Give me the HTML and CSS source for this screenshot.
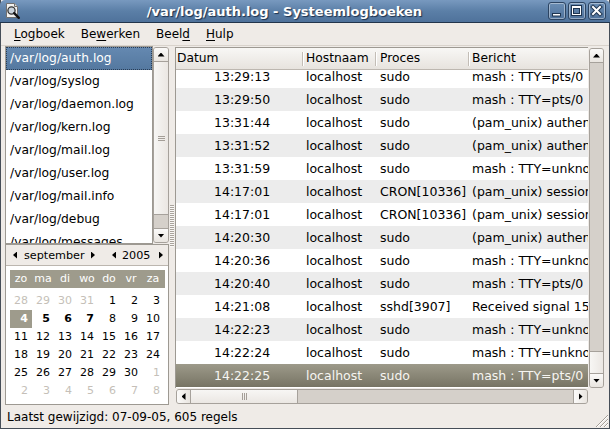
FILE: index.html
```html
<!DOCTYPE html>
<html lang="nl">
<head>
<meta charset="utf-8">
<title>Systeemlogboeken</title>
<link rel="stylesheet" href="styles.css">
</head>
<body>
<div class="window">
  <div class="titlebar">
    <svg class="appicon" width="17" height="18" viewBox="0 0 17 18">
      <path d="M2.5 1.5h8l3 3v11h-11z" fill="#f2f2f0" stroke="#707070"/>
      <path d="M10.5 1.5v3h3" fill="#d8d8d6" stroke="#707070"/>
      <circle cx="7.5" cy="8.5" r="3.6" fill="#c9d3dc" stroke="#333" stroke-width="1.3"/>
      <path d="M10.2 11.2l4.6 4.6" stroke="#111" stroke-width="2.4" stroke-linecap="round"/>
    </svg>
    <div class="title">/var/log/auth.log - Systeemlogboeken</div>
    <div class="wbtns">
      <div class="wbtn"><svg width="16" height="16" viewBox="0 0 16 16"><rect x="3.5" y="10.5" width="8" height="2.5" fill="#fff" stroke="#1f3550"/></svg></div>
      <div class="wbtn"><svg width="16" height="16" viewBox="0 0 16 16"><rect x="2.5" y="2.5" width="10" height="10" fill="#fff" stroke="#1f3550"/><rect x="4.5" y="5.5" width="6" height="5" fill="#5a7da5" stroke="#1f3550"/></svg></div>
      <div class="wbtn"><svg width="16" height="16" viewBox="0 0 16 16"><path d="M4 4l7 7M11 4l-7 7" stroke="#1f3550" stroke-width="4" stroke-linecap="square"/><path d="M4 4l7 7M11 4l-7 7" stroke="#fff" stroke-width="2" stroke-linecap="square"/></svg></div>
    </div>
  </div>

  <div class="menubar">
    <span class="mi"><u>L</u>ogboek</span>
    <span class="mi">Be<u>w</u>erken</span>
    <span class="mi">Beel<u>d</u></span>
    <span class="mi"><u>H</u>ulp</span>
  </div>

  <div class="main">
    <div class="leftpane">
      <div class="filebox">
        <div class="filelist">
          <div class="file sel">/var/log/auth.log</div>
          <div class="file">/var/log/syslog</div>
          <div class="file">/var/log/daemon.log</div>
          <div class="file">/var/log/kern.log</div>
          <div class="file">/var/log/mail.log</div>
          <div class="file">/var/log/user.log</div>
          <div class="file">/var/log/mail.info</div>
          <div class="file">/var/log/debug</div>
          <div class="file">/var/log/messages</div>
        </div>
        <div class="sb v lsb">
          <div class="step"><span class="arr up"></span></div>
          <div class="thumb lthumb"><span class="grip-h"></span></div>
          <div class="trough"></div>
          <div class="step bot"><span class="arr down"></span></div>
        </div>
      </div>

      <div class="calendar">
        <div class="calhead">
          <span class="carr left a1"></span>
          <span class="month">september</span>
          <span class="carr right"></span>
          <span class="carr left a3"></span>
          <span class="year">2005</span>
          <span class="carr right"></span>
        </div>
        <div class="calbody">
          <div class="daynames">
            <span>zo</span><span>ma</span><span>di</span><span>wo</span><span>do</span><span>vr</span><span>za</span>
          </div>
          <div class="week"><span class="o">28</span><span class="o">29</span><span class="o">30</span><span class="o">31</span><span>1</span><span>2</span><span>3</span></div>
          <div class="week"><span class="today">4</span><span class="b">5</span><span class="b">6</span><span class="b">7</span><span>8</span><span>9</span><span>10</span></div>
          <div class="week"><span>11</span><span>12</span><span>13</span><span>14</span><span>15</span><span>16</span><span>17</span></div>
          <div class="week"><span>18</span><span>19</span><span>20</span><span>21</span><span>22</span><span>23</span><span>24</span></div>
          <div class="week"><span>25</span><span>26</span><span>27</span><span>28</span><span>29</span><span>30</span><span class="o">1</span></div>
          <div class="week"><span class="o">2</span><span class="o">3</span><span class="o">4</span><span class="o">5</span><span class="o">6</span><span class="o">7</span><span class="o">8</span></div>
        </div>
      </div>
    </div>

    <div class="handle"><div class="pgrip"></div></div>

    <div class="rightpane">
      <div class="tree">
        <div class="thead">
          <div class="th c1">Datum</div>
          <div class="th c2 sep">Hostnaam</div>
          <div class="th c3 sep">Proces</div>
          <div class="th c4 sep">Bericht</div>
        </div>
        <div class="tbody">
          <div class="rows">
            <div class="r"><span class="c1">13:29:13</span><span class="c2">localhost</span><span class="c3">sudo</span><span class="c4">mash : TTY=pts/0</span></div>
            <div class="r alt"><span class="c1">13:29:50</span><span class="c2">localhost</span><span class="c3">sudo</span><span class="c4">mash : TTY=pts/0</span></div>
            <div class="r"><span class="c1">13:31:44</span><span class="c2">localhost</span><span class="c3">sudo</span><span class="c4">(pam_unix) authentication failure</span></div>
            <div class="r alt"><span class="c1">13:31:52</span><span class="c2">localhost</span><span class="c3">sudo</span><span class="c4">(pam_unix) authentication failure</span></div>
            <div class="r"><span class="c1">13:31:59</span><span class="c2">localhost</span><span class="c3">sudo</span><span class="c4">mash : TTY=unknown</span></div>
            <div class="r alt"><span class="c1">14:17:01</span><span class="c2">localhost</span><span class="c3">CRON[10336]</span><span class="c4">(pam_unix) session opened for user root</span></div>
            <div class="r"><span class="c1">14:17:01</span><span class="c2">localhost</span><span class="c3">CRON[10336]</span><span class="c4">(pam_unix) session closed for user root</span></div>
            <div class="r alt"><span class="c1">14:20:30</span><span class="c2">localhost</span><span class="c3">sudo</span><span class="c4">(pam_unix) authentication failure</span></div>
            <div class="r"><span class="c1">14:20:36</span><span class="c2">localhost</span><span class="c3">sudo</span><span class="c4">mash : TTY=unknown</span></div>
            <div class="r alt"><span class="c1">14:20:40</span><span class="c2">localhost</span><span class="c3">sudo</span><span class="c4">mash : TTY=pts/0</span></div>
            <div class="r"><span class="c1">14:21:08</span><span class="c2">localhost</span><span class="c3">sshd[3907]</span><span class="c4">Received signal 15; terminating.</span></div>
            <div class="r alt"><span class="c1">14:22:23</span><span class="c2">localhost</span><span class="c3">sudo</span><span class="c4">mash : TTY=unknown</span></div>
            <div class="r"><span class="c1">14:22:24</span><span class="c2">localhost</span><span class="c3">sudo</span><span class="c4">mash : TTY=unknown</span></div>
            <div class="r sel"><span class="c1">14:22:25</span><span class="c2">localhost</span><span class="c3">sudo</span><span class="c4">mash : TTY=pts/0</span></div>
          </div>
        </div>
      </div>
      <div class="sb v rsb">
        <div class="step"><span class="arr up"></span></div>
        <div class="trough"></div>
        <div class="thumb rthumb"></div>
        <div class="step bot"><span class="arr down"></span></div>
      </div>
      <div class="sb h hsb">
        <div class="step"><span class="arr left"></span></div>
        <div class="thumb hthumb"><span class="grip-v"></span></div>
        <div class="trough"></div>
        <div class="step bot"><span class="arr right"></span></div>
      </div>
      <div class="corner"></div>
    </div>
  </div>

  <div class="statusbar">
    <span class="stext">Laatst gewijzigd: 07-09-05, 605 regels</span>
    <svg class="resize" width="15" height="15" viewBox="0 0 15 15">
      <path d="M3 15L15 3M7 15L15 7M11 15L15 11" stroke="#a39d96" stroke-width="1"/>
      <path d="M4 15L15 4M8 15L15 8M12 15L15 12" stroke="#ffffff" stroke-width="1"/>
    </svg>
  </div>
</div>
</body>
</html>
```

FILE: styles.css
```css
* { box-sizing: border-box; }
html, body { margin: 0; padding: 0; }
body {
  width: 610px;
  height: 429px;
  overflow: hidden;
  background: #efebe7;
  font-family: "DejaVu Sans", sans-serif;
  font-size: 12.5px;
  color: #000;
}

.window {
  width: 610px;
  height: 429px;
  display: flex;
  flex-direction: column;
  border: 1px solid #454d57;
  border-top: 0;
  background: #efebe7;
}

/* title bar */
.titlebar {
  flex: none;
  height: 23px;
  margin: 0 -1px;
  display: flex;
  align-items: center;
  background: linear-gradient(#7899bf, #5b7fa7 50%, #4f729b);
  border-bottom: 1px solid #22354c;
  border-radius: 5px 5px 0 0;
  color: #fff;
}
.appicon { flex: none; margin-left: 4px; }
.title {
  flex: 1;
  text-align: center;
  font-weight: bold;
  font-size: 13px;
  text-shadow: 1px 1px 1px #1c304b;
  white-space: nowrap;
}
.wbtns { display: flex; gap: 2px; margin-right: 4px; }
.wbtn {
  width: 18px;
  height: 18px;
  border: 1px solid #2c4462;
  border-radius: 3px;
  background: linear-gradient(#6a8db4, #4f729b);
  box-shadow: inset 0 0 0 1px rgba(255,255,255,0.4);
}
.wbtn svg { display: block; }

/* menu bar */
.menubar {
  flex: none;
  height: 23px;
  display: flex;
  align-items: center;
  padding-left: 5px;
  font-size: 12px;
  border-bottom: 1px solid #d9d3cc;
}
.mi { padding: 0 8px; }
.mi u { text-underline-offset: 2px; }

/* main area */
.main {
  flex: none;
  height: 359px;
  display: flex;
  padding: 0 4px;
}
.leftpane {
  width: 164px;
  display: flex;
  flex-direction: column;
}
.filebox { height: 198px; display: flex; }
.filelist {
  width: 148px;
  border: 1px solid #9d9992;
  background: #fff;
  overflow: hidden;
  font-size: 12.3px;
}
.file {
  height: 23px;
  line-height: 23px;
  padding-left: 4px;
  white-space: nowrap;
}
.file.sel {
  background: linear-gradient(#6589b1, #54789f);
  color: #fff;
  outline: 1px dotted #2a3d55;
  outline-offset: -1px;
}

/* scrollbars */
.sb {
  display: flex;
  background: #d5d0ca;
  border: 1px solid #a6a19b;
  border-radius: 3px;
  overflow: hidden;
}
.sb.v { flex-direction: column; }
.sb.h { flex-direction: row; }
.step {
  flex: none;
  display: flex;
  align-items: center;
  justify-content: center;
  background: linear-gradient(#fbfaf9, #e9e5e0);
}
.sb.v .step { height: 14px; border-bottom: 1px solid #a6a19b; }
.sb.v .step.bot { border-bottom: 0; border-top: 1px solid #a6a19b; }
.sb.h .step { width: 14px; border-right: 1px solid #a6a19b; background: linear-gradient(90deg, #fbfaf9, #e9e5e0); }
.sb.h .step.bot { border-right: 0; border-left: 1px solid #a6a19b; }
.trough { flex: 1; }
.thumb {
  flex: none;
  display: flex;
  align-items: center;
  justify-content: center;
}
.sb.v .thumb { background: linear-gradient(90deg, #f7f6f4, #ebe7e3); border-bottom: 1px solid #a6a19b; }
.sb.h .thumb { background: linear-gradient(#f7f6f4, #ebe7e3); border-right: 1px solid #a6a19b; }
.lthumb { height: 153px; }
.rthumb { height: 22px; border-top: 1px solid #a6a19b; border-bottom: 0 !important; }
.hthumb { width: 107px; }
.grip-h {
  width: 7px;
  height: 5px;
  background: repeating-linear-gradient(#a49e97 0 1px, transparent 1px 2px);
}
.grip-v {
  width: 5px;
  height: 7px;
  background: repeating-linear-gradient(90deg, #a49e97 0 1px, transparent 1px 2px);
}
.arr { display: block; background: #000; }
.arr.up { width: 7px; height: 4px; clip-path: polygon(0 100%, 100% 100%, 50% 0); }
.arr.down { width: 7px; height: 4px; clip-path: polygon(0 0, 100% 0, 50% 100%); }
.arr.left { width: 4px; height: 7px; clip-path: polygon(100% 0, 100% 100%, 0 50%); }
.arr.right { width: 4px; height: 7px; clip-path: polygon(0 0, 0 100%, 100% 50%); }

.lsb { width: 16px; margin: 1px 0; }

/* calendar */
.calendar {
  height: 161px;
  border: 1px solid #9d9992;
  display: flex;
  flex-direction: column;
  font-size: 11px;
}
.calhead {
  height: 21px;
  flex: none;
  display: flex;
  align-items: center;
  background: #efebe7;
  border-bottom: 1px solid #bcb6af;
  font-size: 11.2px;
}
.carr { display: block; width: 4px; height: 7px; background: #000; }
.carr.left { clip-path: polygon(100% 0, 100% 100%, 0 50%); }
.carr.right { clip-path: polygon(0 0, 0 100%, 100% 50%); }
.carr.a1 { margin-left: 7px; }
.month { width: 74px; padding-left: 7px; }
.carr.a3 { margin-left: 17px; }
.year { width: 43px; padding-left: 6px; }
.calbody {
  flex: 1;
  background: #fff;
  padding: 4px 3px 0 4px;
}
.daynames, .week {
  display: grid;
  grid-template-columns: repeat(7, 22px);
}
.daynames {
  height: 18px;
  background: #9e9b8c;
  color: #fff;
  margin-bottom: 4px;
}
.daynames span { text-align: center; line-height: 18px; }
.week span {
  height: 18px;
  line-height: 18px;
  text-align: right;
  padding-right: 4px;
}
.week .o { color: #c5bfb8; }
.week .b { font-weight: bold; }
.week .today { background: #9e9b8c; color: #fff; font-weight: bold; }

/* paned handle */
.handle {
  width: 6px;
  display: flex;
  align-items: center;
  justify-content: center;
}
.pgrip {
  width: 4px;
  height: 42px;
  background: repeating-linear-gradient(#a9a39c 0 1px, #f9f8f6 1px 2px);
}

/* tree view */
.rightpane {
  width: 430px;
  padding-top: 1px;
  display: grid;
  grid-template-columns: 413px 17px;
  grid-template-rows: 341px 17px;
}
.tree {
  border-left: 1px solid #9d9992;
  border-top: 1px solid #9d9992;
  background: #fff;
  display: flex;
  flex-direction: column;
  overflow: hidden;
  font-size: 12.5px;
}
.thead {
  flex: none;
  height: 22px;
  display: flex;
  background: linear-gradient(#f8f7f5, #e7e3de);
  border-bottom: 1px solid #bdb7b0;
  font-size: 12.3px;
}
.th {
  position: relative;
  line-height: 21px;
  white-space: nowrap;
  overflow: hidden;
}
.th.sep::before {
  content: "";
  position: absolute;
  left: 0;
  top: 4px;
  height: 14px;
  width: 1px;
  background: #c3bdb6;
  box-shadow: 1px 0 0 #fff;
}
.c1 { flex: none; width: 126px; padding-left: 38px; }
.c2 { flex: none; width: 73px; padding-left: 4px; }
.c3 { flex: none; width: 93px; padding-left: 5px; }
.c4 { flex: 1; padding-left: 4px; white-space: nowrap; }
.th.c1 { padding-left: 1px; }
.tbody { flex: 1; overflow: hidden; }
.rows { margin-top: -5px; }
.r {
  display: flex;
  height: 23px;
  line-height: 23px;
  white-space: nowrap;
  background: #fff;
}
.r span { overflow: hidden; }
.r .c4 { overflow: visible; }
.r.alt { background: #ececec; }
.r.sel { background: linear-gradient(#9d9a8a, #777464); color: #f6f5f1; }

.rsb { margin: 1px 1px 0 1px; }
.hsb { margin: 1px 0 1px 1px; }
.corner { background: #efebe7; }

/* status bar */
.statusbar {
  flex: none;
  height: 23px;
  display: flex;
  align-items: center;
  padding-left: 6px;
  font-size: 12px;
}
.stext { flex: 1; white-space: nowrap; }
.resize { align-self: flex-end; margin-bottom: 1px; margin-right: 1px; }
```
